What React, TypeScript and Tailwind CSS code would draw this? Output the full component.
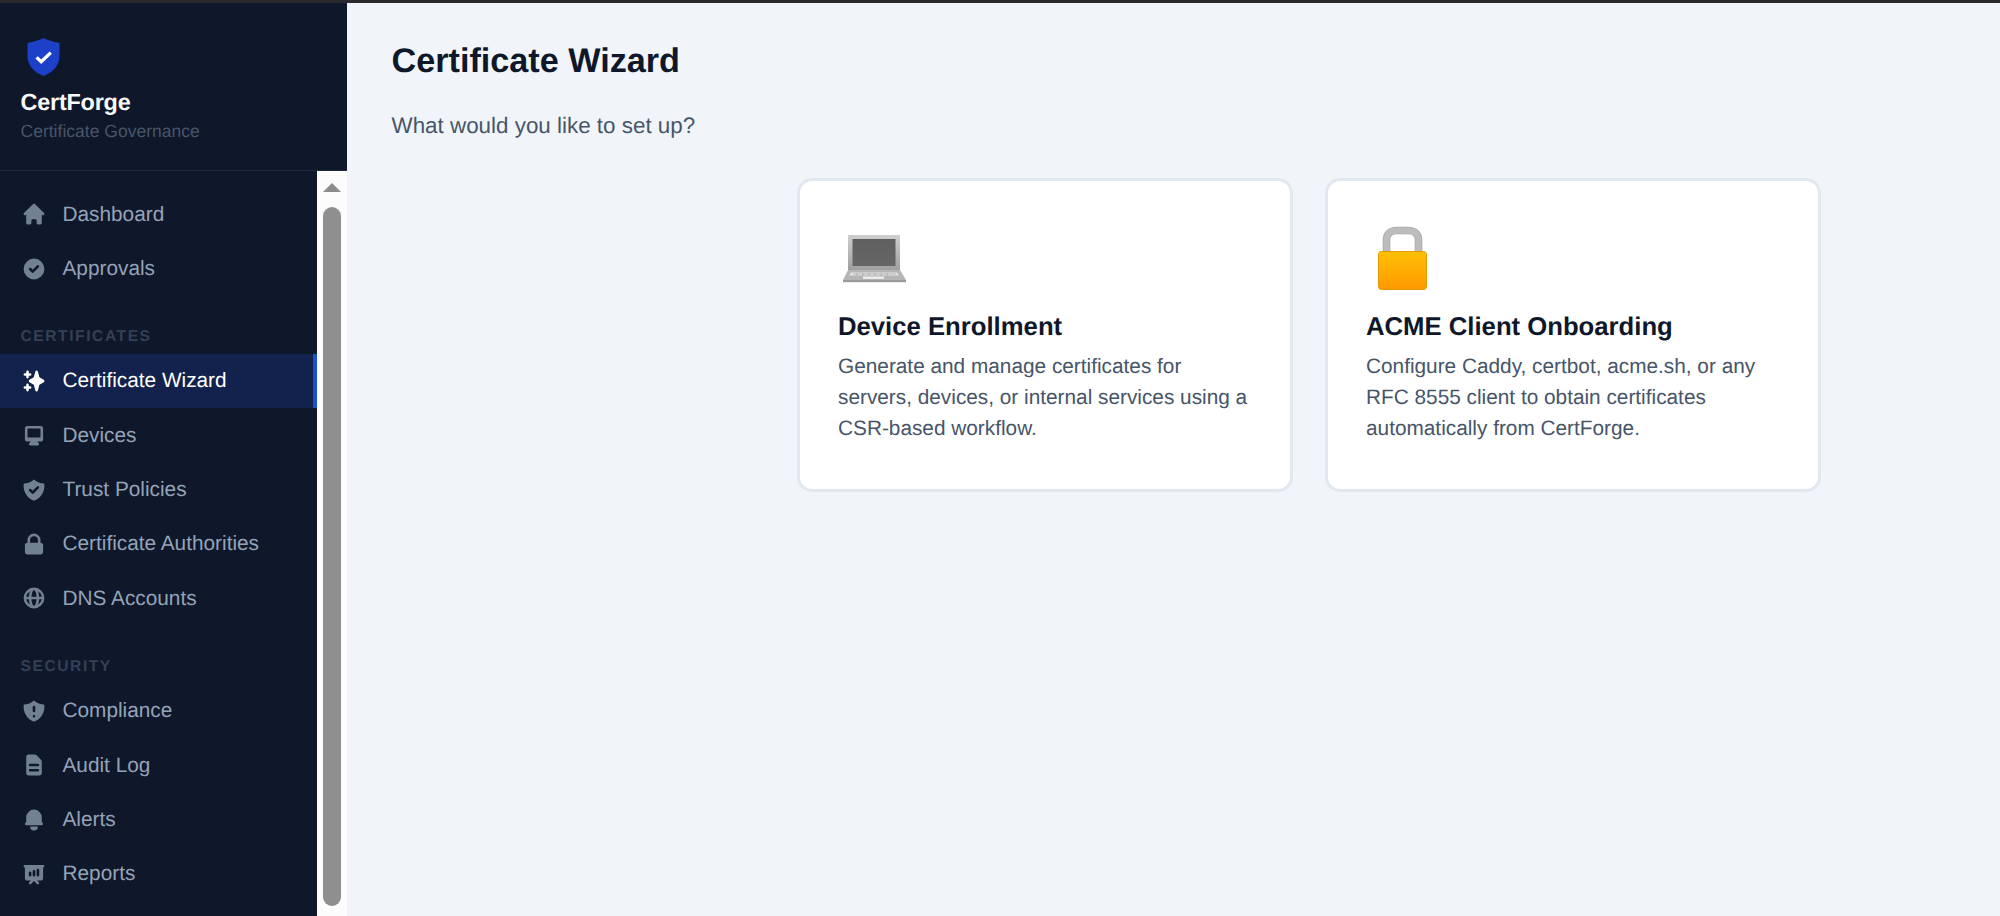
import React from "react";
import type { ComponentType } from "react";
import { HiHome, HiCheckCircle, HiSparkles, HiDesktopComputer, HiShieldCheck, HiLockClosed, HiGlobeAlt, HiShieldExclamation, HiDocumentText, HiBell, HiPresentationChartBar } from "react-icons/hi";

type Item = { label: string; icon: ComponentType<{ className?: string }>; active?: boolean };

const top: Item[] = [
  { label: "Dashboard", icon: HiHome },
  { label: "Approvals", icon: HiCheckCircle },
];
const certs: Item[] = [
  { label: "Certificate Wizard", icon: HiSparkles, active: true },
  { label: "Devices", icon: HiDesktopComputer },
  { label: "Trust Policies", icon: HiShieldCheck },
  { label: "Certificate Authorities", icon: HiLockClosed },
  { label: "DNS Accounts", icon: HiGlobeAlt },
];
const security: Item[] = [
  { label: "Compliance", icon: HiShieldExclamation },
  { label: "Audit Log", icon: HiDocumentText },
  { label: "Alerts", icon: HiBell },
  { label: "Reports", icon: HiPresentationChartBar },
];

function NavRow({ item }: { item: Item }) {
  const Icon = item.icon;
  return (
    <div
      className={
        item.active
          ? "flex h-[54.38px] items-center gap-[16px] border-r-[4px] border-[#1d4ed8] bg-[#12224d] pl-[20.5px] text-[20.8px] text-white"
          : "flex h-[54.38px] items-center gap-[16px] pl-[20.5px] text-[20.8px] text-[#94a3b8]"
      }
    >
      <Icon className={item.active ? "h-[26px] w-[26px] shrink-0" : "h-[26px] w-[26px] shrink-0 opacity-75"} />
      <span>{item.label}</span>
    </div>
  );
}

function Section({ title }: { title: string }) {
  return (
    <div className="mt-[30px] mb-[6px] pl-[20.5px] text-[15.6px] leading-[22px] font-bold tracking-[1.56px] text-[#334155]">
      {title}
    </div>
  );
}

function Logo() {
  return (
    <svg className="h-[40px] w-[34px]" viewBox="0 0 34 40">
      <path
        d="M16.5 1 C20.5 3 26 4.6 32.5 6 V19 C32.5 28 26.5 35 16.5 39 C6.5 35 .5 28 .5 19 V6 C7 4.6 12.5 3 16.5 1 Z"
        fill="#1d40c8"
      />
      <path d="M9.6 20.4 L14.2 24.8 L23.8 15.6" fill="none" stroke="#ffffff" strokeWidth="3.3" />
    </svg>
  );
}

function Laptop() {
  return (
    <svg className="h-[82px] w-[80px]" viewBox="0 0 80 82">
      <defs>
        <linearGradient id="lid" x1="0" y1="0" x2="0" y2="1">
          <stop offset="0" stopColor="#cfcfcf" />
          <stop offset="1" stopColor="#9e9e9e" />
        </linearGradient>
        <linearGradient id="scr" x1="0" y1="0" x2="0" y2="1">
          <stop offset="0" stopColor="#5f5f5f" />
          <stop offset="1" stopColor="#666666" />
        </linearGradient>
      </defs>
      <rect x="10" y="16" width="52" height="36" fill="url(#lid)" />
      <rect x="14.5" y="20" width="43" height="27" fill="url(#scr)" />
      <path d="M10 51 H62 L68 61 H5 Z" fill="#b5b5b5" />
      <rect x="5" y="61" width="63" height="2.2" fill="#9a9a9a" />
      <path d="M13 53.5 H59 L61 56.5 H11 Z" fill="#e2e2e2" />
      <path d="M15 55 H58 M19 54 V57 M25 54 V57 M31 54 V57 M37 54 V57 M43 54 V57 M49 54 V57" stroke="#a8a8a8" strokeWidth="0.7" />
      <rect x="25" y="57.5" width="21" height="2.4" fill="#eeeeee" />
    </svg>
  );
}

function Padlock() {
  return (
    <svg className="h-[82px] w-[80px]" viewBox="0 0 80 82">
      <defs>
        <linearGradient id="body" x1="0" y1="0" x2="0" y2="1">
          <stop offset="0" stopColor="#ffc107" />
          <stop offset="1" stopColor="#ff9800" />
        </linearGradient>
      </defs>
      <path d="M20.5 34 V21 C20.5 15 24.5 11.5 30.5 11.5 H42.5 C48.5 11.5 52.5 15 52.5 21 V34" fill="none" stroke="#a8a8a8" strokeWidth="7.6" />
      <path d="M20.5 34 V21 C20.5 15 24.5 11.5 30.5 11.5 H42.5 C48.5 11.5 52.5 15 52.5 21 V34" fill="none" stroke="#bdbdbd" strokeWidth="6" />
      <rect x="12.5" y="32.5" width="48" height="38" rx="3" fill="url(#body)" stroke="#e39a00" strokeWidth="1" />
    </svg>
  );
}

function Card({ icon, title, lines }: { icon: React.ReactNode; title: string; lines: string[] }) {
  return (
    <div className="h-[314px] w-[496px] rounded-[15px] border-[3px] border-[#e2e8f0] bg-white pt-[38px] pl-[38px]">
      <div className="h-[92px]">{icon}</div>
      <div className="text-[25.7px] leading-[32px] font-bold text-[#0f172a]">{title}</div>
      <div className="mt-[7.5px] text-[20.8px] leading-[31.2px] text-[#475569]">
        {lines.map((l) => (
          <div key={l}>{l}</div>
        ))}
      </div>
    </div>
  );
}

export default function App() {
  return (
    <div className="flex h-[916px] flex-col overflow-hidden bg-[#f1f5f9] font-['Liberation_Sans',Arial,sans-serif] [text-rendering:geometricPrecision]">
      <div className="h-[3px] shrink-0 bg-[#2a2a2d]" />
      <div className="flex min-h-0 flex-1">
        <aside className="flex w-[347px] shrink-0 flex-col bg-[#0f172a]">
          <div className="h-[168px] shrink-0 border-b border-[#1e293b] pt-[34px] pl-[20.5px]">
            <div className="pl-[6.5px]">
              <Logo />
            </div>
            <div className="mt-[9px] text-[23.4px] leading-[32px] font-bold tracking-[-0.2px] text-[#f8fafc]">CertForge</div>
            <div className="mt-[1px] text-[17.55px] leading-[24px] text-[#475569]">Certificate Governance</div>
          </div>
          <div className="flex min-h-0 flex-1">
            <nav className="w-[317px] shrink-0 pt-[16px]">
              {top.map((i) => (
                <NavRow key={i.label} item={i} />
              ))}
              <Section title="CERTIFICATES" />
              {certs.map((i) => (
                <NavRow key={i.label} item={i} />
              ))}
              <Section title="SECURITY" />
              {security.map((i) => (
                <NavRow key={i.label} item={i} />
              ))}
            </nav>
            <div className="flex w-[30px] flex-col items-center bg-[#fcfcfd] pt-[12px]">
              <div className="h-0 w-0 border-x-[9px] border-b-[9px] border-x-transparent border-b-[#8c8c8c]" />
              <div className="mt-[15px] h-[699px] w-[18px] rounded-full bg-[#8f8f8f]" />
            </div>
          </div>
        </aside>
        <main className="min-w-0 flex-1 pt-[38px] pl-[44.5px]">
          <h1 className="text-[34.2px] leading-[40px] font-bold text-[#0f172a]">Certificate Wizard</h1>
          <p className="mt-[29px] text-[22.4px] leading-[32px] text-[#475569]">What would you like to set up?</p>
          <div className="mt-[36px] ml-[405.5px] flex gap-[32px]">
            <Card icon={<Laptop />} title="Device Enrollment" lines={["Generate and manage certificates for", "servers, devices, or internal services using a", "CSR-based workflow."]} />
            <Card icon={<Padlock />} title="ACME Client Onboarding" lines={["Configure Caddy, certbot, acme.sh, or any", "RFC 8555 client to obtain certificates", "automatically from CertForge."]} />
          </div>
        </main>
      </div>
    </div>
  );
}
